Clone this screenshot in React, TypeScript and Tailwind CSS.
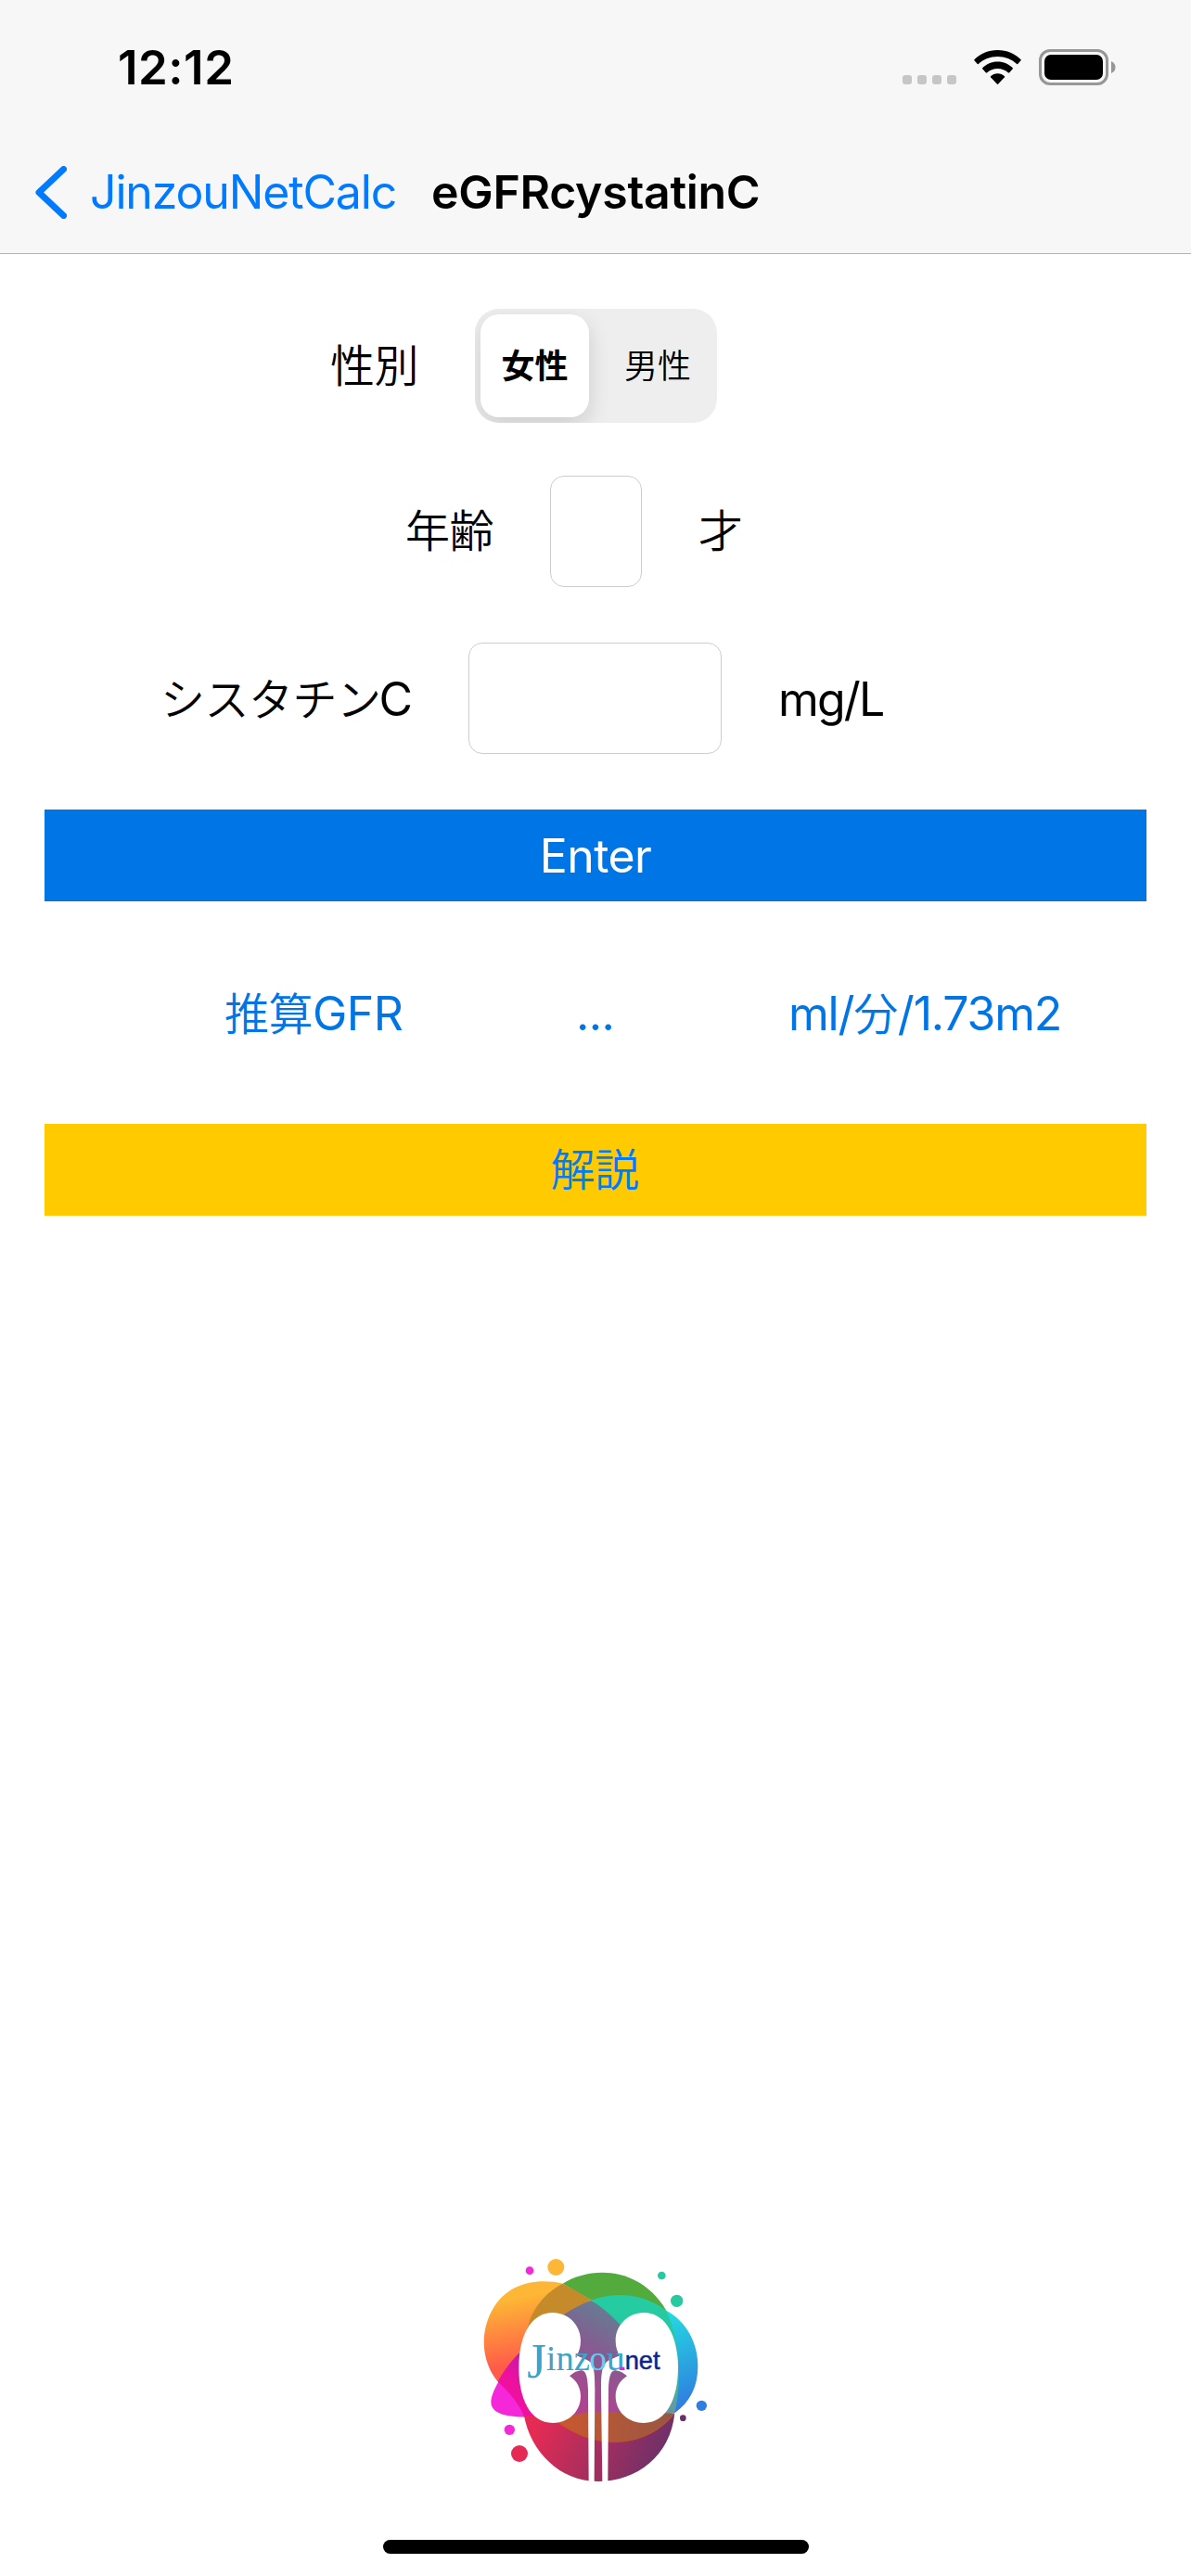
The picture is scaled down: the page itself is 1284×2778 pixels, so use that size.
import type { ReactNode } from "react"

function StatusBar() {
  return (
    <div className="flex h-[141px] items-start justify-between pl-[127px] pr-[81px]">
      <span className="mt-[43px] text-[51px] font-semibold leading-[60px] tracking-[0.5px]">12:12</span>
      <div className="mt-[53px] flex h-[39px]">
        <div className="mt-[28px] flex gap-[6px]">
          <i className="size-[10px] rounded-[3px] bg-[#c6c6c6]" />
          <i className="size-[10px] rounded-[3px] bg-[#c6c6c6]" />
          <i className="size-[10px] rounded-[3px] bg-[#c6c6c6]" />
          <i className="size-[10px] rounded-[3px] bg-[#c6c6c6]" />
        </div>
        <svg className="ml-[19px] mt-px h-[37px] w-[51px]" viewBox="0 0 51 37">
          <path d="M25.5 0C35.5 0 44.3 3.900 50.600 10.200Q51 10.700 50.600 11.200L47.200 15Q46.700 15.400 46.200 15C40.700 9.800 33.400 7 25.500 7S10.300 9.800 4.800 15Q4.300 15.400 3.800 15L.4 11.200Q0 10.700 .4 10.200C6.700 3.900 15.500 0 25.500 0Z" />
          <path d="M25.500 12.500C32 12.500 37.500 15 41.800 19.200Q42.200 19.700 41.800 20.200L38 24.400Q37.500 24.800 37 24.400C33.900 21.500 30 19.900 25.500 19.900S17.100 21.500 14 24.400Q13.500 24.800 13 24.400L9.200 20.200Q8.800 19.700 9.200 19.200C13.500 15 19 12.500 25.500 12.500Z" />
          <path d="M25.500 25.200C28.400 25.200 31 26.300 33 28.200Q33.300 28.700 33 29.200L26.200 36.600Q25.500 37.200 24.800 36.600L18 29.200Q17.700 28.700 18 28.200C20 26.300 22.600 25.200 25.500 25.200Z" />
        </svg>
        <div className="ml-[19px] h-[39px] w-[75px] rounded-[12px] border-[3px] border-[#979797] p-[3px]">
          <div className="h-full rounded-[7px] bg-black" />
        </div>
        <svg className="ml-[3px] mt-[13px] h-[13px] w-[5px]" viewBox="0 0 5 13">
          <path d="M0 0Q4.500 2 4.500 6.500T0 13Z" fill="#979797" />
        </svg>
      </div>
    </div>
  )
}

function Field({ className }: { className: string }) {
  return <div className={`h-[120px] rounded-[15px] border border-[#cdcdcd] bg-white ${className}`} />
}

function Kanji({ children }: { children: ReactNode }) {
  return <span className="text-[48px] font-[350] tracking-[-0.5px]">{children}</span>
}

function Logo() {
  return (
    <svg className="h-[270px] w-[280px]" viewBox="0 0 840 810">
      <defs>
        <linearGradient id="orange" x1="0.5" y1="0" x2="0.65" y2="1">
          <stop offset="0.15" stopColor="#fdb635" />
          <stop offset="0.8" stopColor="#ff5b49" />
        </linearGradient>
        <linearGradient id="pink" x1="0.8" y1="0" x2="0.3" y2="0.7">
          <stop offset="0.15" stopColor="#b41fb0" />
          <stop offset="0.8" stopColor="#ee109f" />
        </linearGradient>
        <linearGradient id="center" x1="0.8" y1="0" x2="0.3" y2="1">
          <stop offset="0.1" stopColor="#5d8594" />
          <stop offset="0.5" stopColor="#855c91" />
          <stop offset="1" stopColor="#b3418f" />
        </linearGradient>
        <linearGradient id="blue" x1="0.3" y1="0" x2="0.5" y2="1">
          <stop offset="0" stopColor="#24dfe0" />
          <stop offset="1" stopColor="#2f7be1" />
        </linearGradient>
        <linearGradient id="teal" x1="0" y1="0" x2="0" y2="1">
          <stop offset="0" stopColor="#25cca2" />
          <stop offset="0.65" stopColor="#27c5a0" />
          <stop offset="1" stopColor="#7290a0" />
        </linearGradient>
        <linearGradient id="red" x1="0" y1="0.3" x2="1" y2="0.5">
          <stop offset="0.05" stopColor="#e52b53" />
          <stop offset="1" stopColor="#66316a" />
        </linearGradient>
        <linearGradient id="lens" x1="0" y1="0" x2="1" y2="0">
          <stop offset="0" stopColor="#c9582f" />
          <stop offset="1" stopColor="#965744" />
        </linearGradient>
      </defs>

      <path d="M320 128C230 108 140 130 94 210C48 290 60 385 110 445L210 400L240 220Z" fill="url(#orange)" />
      <path d="M320 128C415 70 570 73 655 215L412 182Z" fill="#53ab3e" />
      <path d="M205 280C215 215 260 160 320 128Q368 151 412 182L320 240Z" fill="#c58b2a" />
      <path d="M182 350C145 385 88 475 88 510C88 555 150 560 222 560L260 480Z" fill="#f428d8" />
      <path d="M182 350Q140 390 110 445C145 480 180 515 195 560H260L240 330Z" fill="url(#pink)" />
      <path d="M655 215C720 250 757 320 757 395C757 462 732 510 682 547L600 400Z" fill="url(#blue)" />
      <path d="M412 182C490 153 580 160 655 215C692 290 710 430 682 547L640 556L480 240Z" fill="url(#teal)" />
      <path d="M300 245Q355 203 412 182Q462 213 505 260L610 400L640 560H300Z" fill="url(#center)" />
      <path d="M195 555C215 670 310 768 433 768C560 768 668 685 682 548L500 570Z" fill="url(#red)" />
      <path
        d="M305 578Q350 543 440 543Q540 543 682 548C625 622 540 643 475 640C410 637 350 612 305 578Z"
        fill="url(#lens)"
      />
      <path d="M310 579C355 612 410 637 475 640C540 643 620 622 681 549" fill="none" stroke="#c45224" strokeWidth="3" />

      {/* kidneys and ureters */}
      <g fill="white">
        <path d="M288 222C340 222 378 264 378 312Q378 340 365 361L400 376C420 388 424 405 424 470L422 768H404L402 470C400 420 392 408 378 409Q360 411 342 427C367 443 378 468 378 492C378 545 335 579 288 579C214 579 178 500 178 400C178 302 214 222 288 222Z" />
        <path d="M582 222C530 222 491 264 491 312Q491 340 504 361L470 376C450 388 444 405 444 470L448 768H466L468 470C470 420 478 408 492 409Q510 411 528 427C503 443 491 468 491 492C491 545 535 579 582 579C656 579 693 500 693 400C693 302 656 222 582 222Z" />
      </g>

      <g fontFamily="Liberation Serif, serif" fill="#3ba4cb">
        <text x="205" y="432" fontSize="156" textLength="62" lengthAdjust="spacingAndGlyphs">J</text>
        <text x="266" y="408" fontSize="113" textLength="142" lengthAdjust="spacingAndGlyphs">inz</text>
        <text x="406" y="408" fontSize="113" textLength="56" lengthAdjust="spacingAndGlyphs" fill="#5bd0f3">o</text>
        <text x="461" y="408" fontSize="113" textLength="60" lengthAdjust="spacingAndGlyphs">u</text>
      </g>
      <rect x="505" y="398" width="15" height="10" fill="#f41ae2" />
      <text
        x="521"
        y="406"
        fontSize="84"
        textLength="114"
        lengthAdjust="spacingAndGlyphs"
        fontFamily="Liberation Sans, sans-serif"
        fill="#0c2687"
        stroke="#0c2687"
        strokeWidth="1.500"
      >
        net
      </text>

      <circle cx="213" cy="86" r="13" fill="#f428d8" />
      <circle cx="298" cy="75" r="27" fill="#fdb635" />
      <circle cx="640" cy="102" r="13" fill="#27c99f" />
      <circle cx="689" cy="184" r="20" fill="#27c99f" />
      <circle cx="769" cy="523" r="17" fill="#2f7fe1" />
      <circle cx="709" cy="563" r="10" fill="#66316a" />
      <circle cx="148" cy="601" r="17" fill="#f428d8" />
      <circle cx="180" cy="678" r="27" fill="#e52b53" />
    </svg>
  )
}

export default function App() {
  return (
    <div
      lang="ja"
      className="flex h-[2778px] w-[1284px] flex-col overflow-hidden bg-white font-['Inter','Noto_Sans_CJK_JP',sans-serif] text-[50px] text-black"
    >
      <header className="h-[274px] border-b border-[#b2b2b2] bg-[#f7f7f7]">
        <StatusBar />
        <nav className="flex h-[132px] items-center pl-[38px]">
          <svg className="h-[57px] w-[34px]" viewBox="0 0 34 57" fill="none">
            <path d="M30.500 3.500L4 28.500L30.500 53.500" stroke="#007aff" strokeWidth="7" strokeLinecap="round" strokeLinejoin="round" />
          </svg>
          <a className="ml-[25px] w-[368px] whitespace-nowrap tracking-[-1.150px] text-[#007aff]">JinzouNetCalc</a>
          <h1 className="whitespace-nowrap font-semibold tracking-[-0.3px]">eGFRcystatinC</h1>
        </nav>
      </header>

      <main className="flex flex-col px-[48px] pt-[59px]">
        <div className="flex h-[123px] items-center gap-[61px] pl-[308px]">
          <Kanji>性別</Kanji>
          <div className="flex h-[123px] w-[261px] overflow-hidden rounded-[26px] bg-[#eeeeee] p-[6px] text-[36px]">
            <div className="flex w-[117px] items-center justify-center rounded-[20px] bg-white font-bold shadow-[0_9px_24px_rgba(0,0,0,0.14)]">
              女性
            </div>
            <div className="flex flex-1 items-center justify-center pl-[16px] font-[350]">男性</div>
          </div>
        </div>

        <div className="mt-[57px] flex h-[120px] items-center gap-[61px] pl-[389px]">
          <Kanji>年齢</Kanji>
          <Field className="w-[99px]" />
          <Kanji>才</Kanji>
        </div>

        <div className="mt-[60px] flex h-[120px] items-center pl-[125px]">
          <div className="w-[332px] whitespace-nowrap pt-[2px]">
            <Kanji>シスタチン</Kanji>
            <span className="-ml-[2px]">C</span>
          </div>
          <Field className="w-[273px]" />
          <span className="ml-[61px] pt-[2px] tracking-[-1.800px]">mg/L</span>
        </div>

        <button className="mt-[60px] h-[99px] bg-[#0075e5] pt-[2px] tracking-[-0.6px] text-white">Enter</button>

        <div className="flex h-[240px] items-center pt-[2px] text-[#0075e5]">
          <div className="w-[573px] whitespace-nowrap pl-[194px] tracking-[-0.6px]">
            <Kanji>推算</Kanji>GFR
          </div>
          <div className="w-[229px] tracking-[-0.6px]">...</div>
          <div className="whitespace-nowrap tracking-[-1.200px]">
            ml/<Kanji>分</Kanji>/1.73m2
          </div>
        </div>

        <button className="h-[99px] bg-[#ffcb00] pr-[2px] text-[#007aff]">
          <Kanji>解説</Kanji>
        </button>
      </main>

      <footer className="mt-auto flex h-[358px] flex-col justify-between pb-[24px]">
        <div className="pl-[500px]">
          <Logo />
        </div>
        <div className="ml-[413px] h-[15px] w-[459px] rounded-full bg-black" />
      </footer>
    </div>
  )
}
